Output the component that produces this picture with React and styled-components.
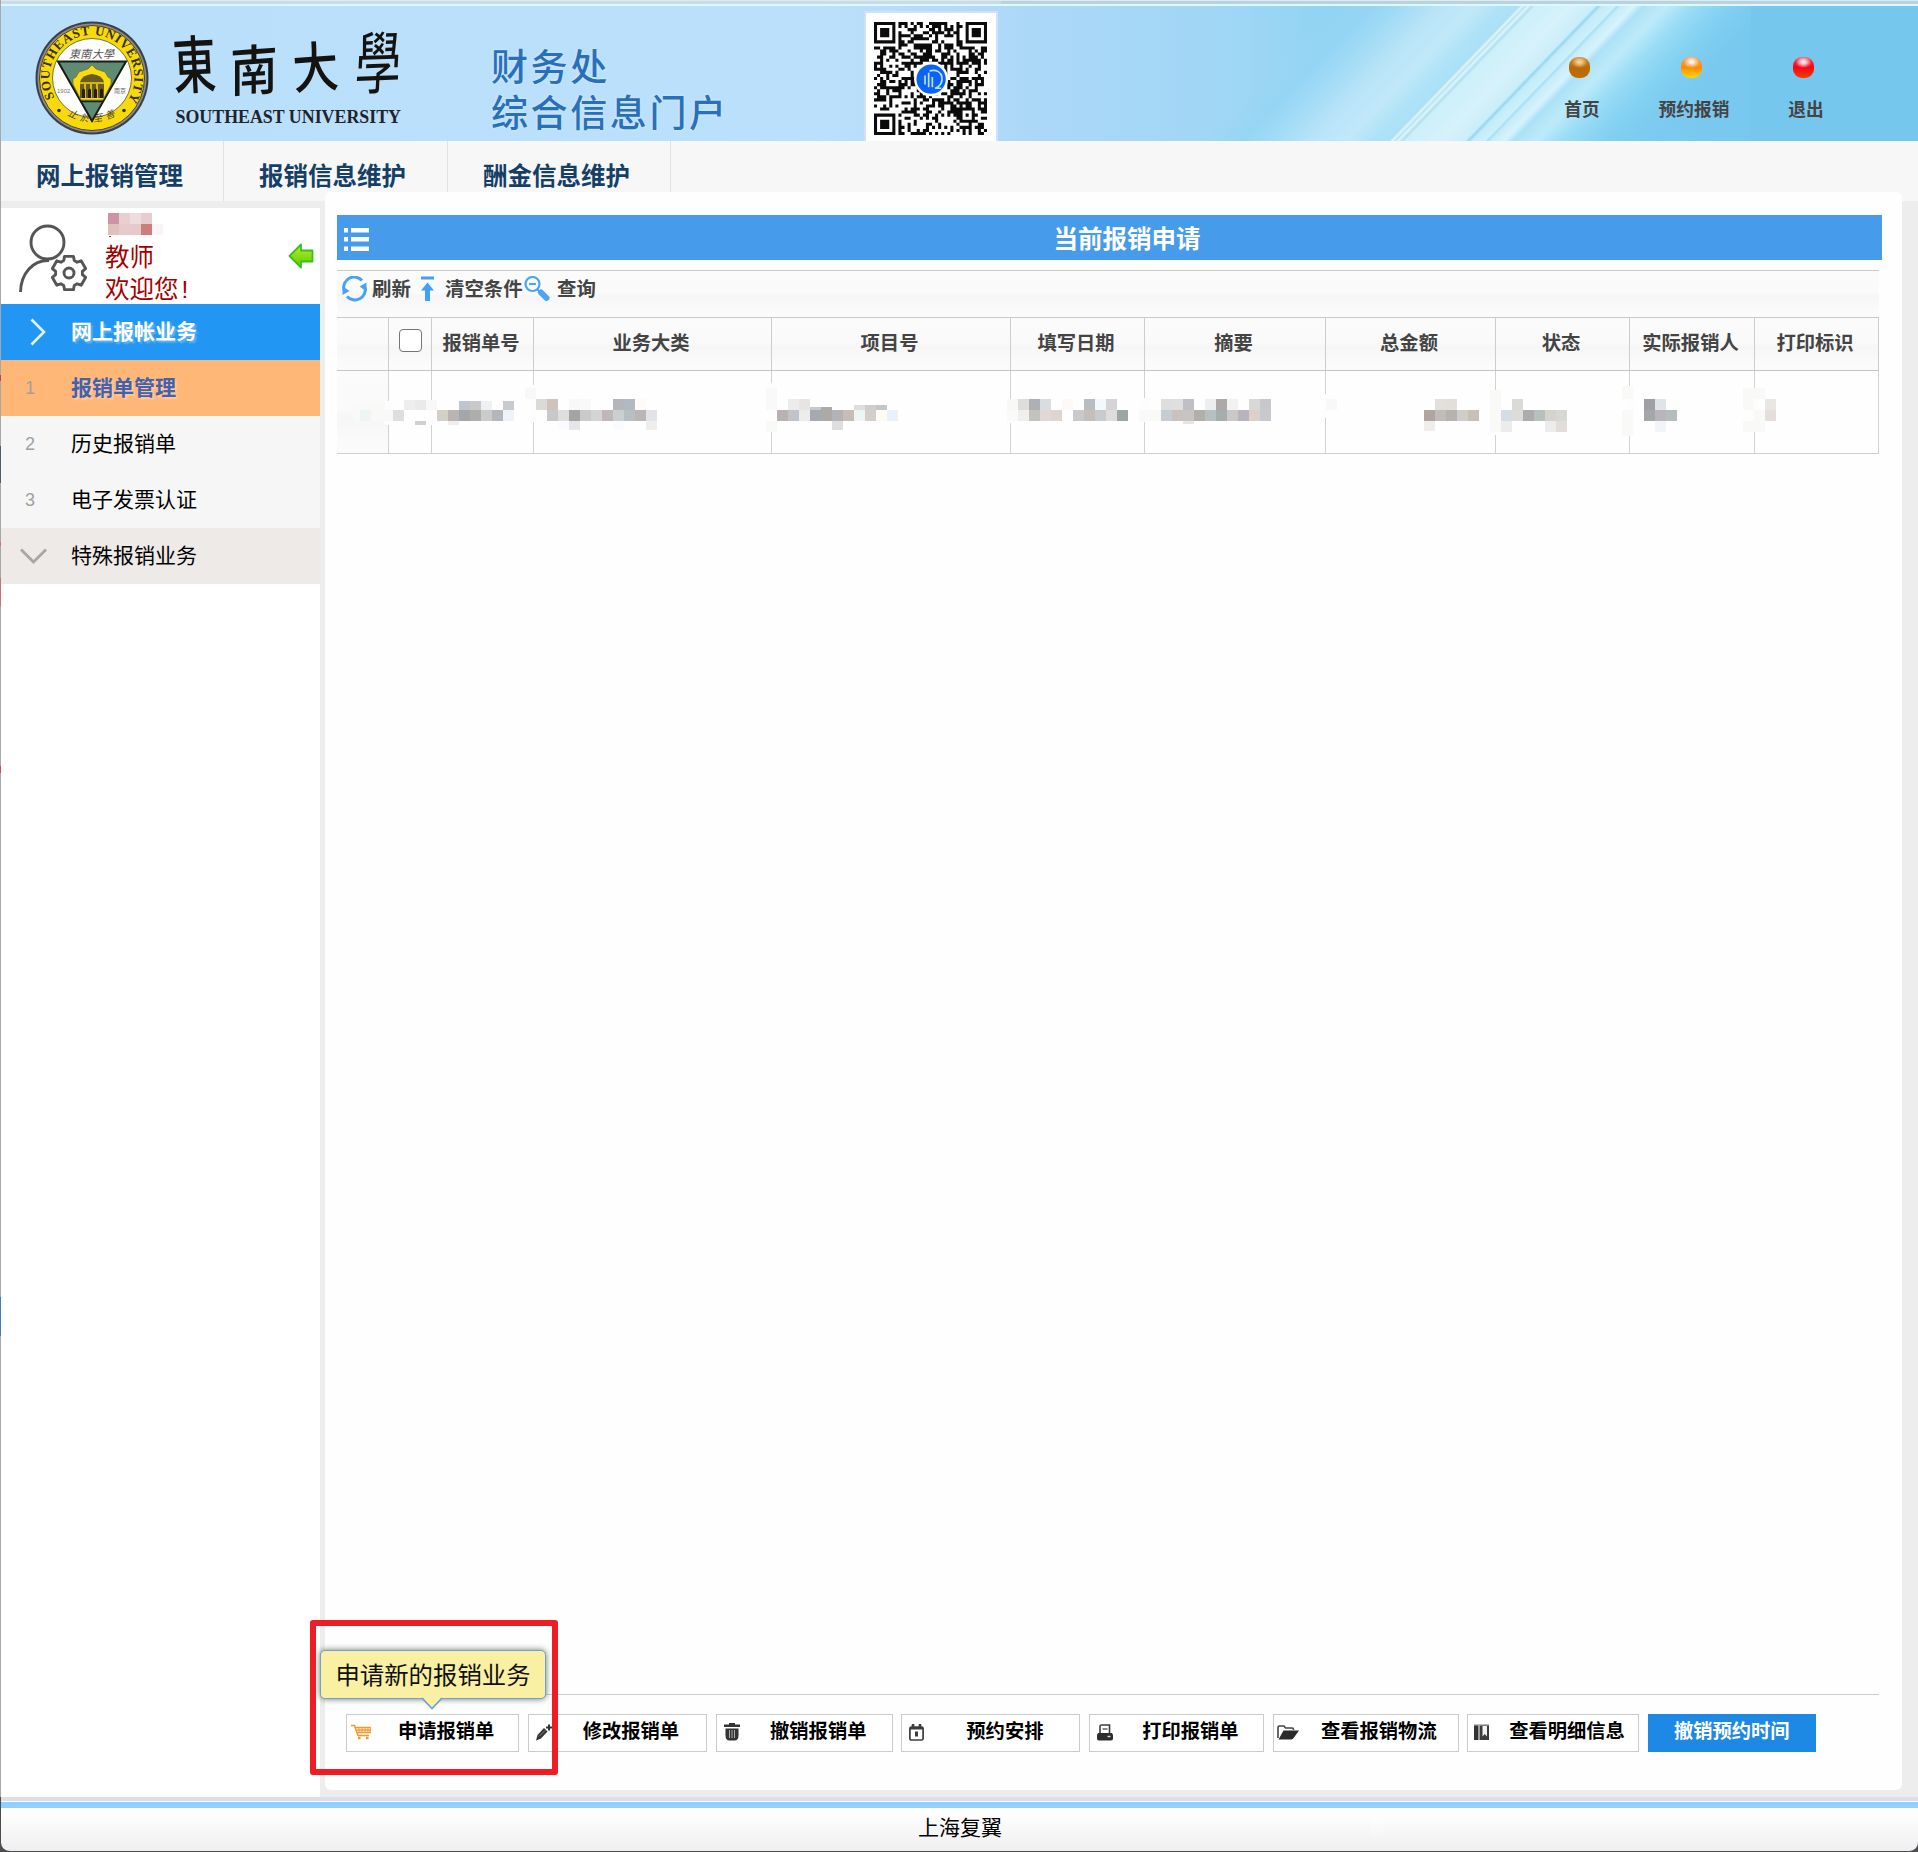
import React from "react";
import styled, { createGlobalStyle, css } from "styled-components";

const Global = createGlobalStyle`
  *, *::before, *::after { box-sizing: border-box; }
  html, body { margin: 0; padding: 0; }
  body {
    background: #ededed;
    font-family: "Liberation Sans", "Noto Sans CJK SC", sans-serif;
    color: #000;
  }
`;

const Page = styled.div`
  position: relative;
  width: 1918px;
  height: 1852px;
  padding-left: 1px;
  display: flex;
  flex-direction: column;
  background: linear-gradient(
      180deg,
      #a8a8a8 375px, #b0485a 375px 381px, #a8a8a8 381px 446px, #4f5b6e 446px 483px, #a8a8a8 483px 542px,
      #c9707a 542px 546px, #a8a8a8 546px 578px, #c9707a 578px 606px, #a8a8a8 606px 766px, #c9505a 766px 773px,
      #a8a8a8 773px 1297px, #3f7fc0 1297px 1336px, #a8a8a8 1336px 1797px, #4c4c50 1797px
    );
  overflow: hidden;
`;

/* ---------- banner ---------- */

const Banner = styled.header`
  position: relative;
  flex: none;
  height: 141px;
  display: flex;
  align-items: flex-start;
  background: linear-gradient(90deg, #badffb 0, #bbe0fb 820px, #acd8f8 1030px, #a0d6f5 1230px, #92d4f3 1320px, #78c8ef 1720px, #76c7ee 100%);
`;

const BannerArt = styled.svg`
  position: absolute;
  inset: 0;
  width: 100%;
  height: 100%;
`;

const SchoolLogo = styled.svg`
  position: relative;
  flex: none;
  width: 420px;
  height: 141px;
`;

const PortalName = styled.h1`
  position: relative;
  margin: 46px 0 0 70px;
  width: 373px;
  font-size: 37px;
  line-height: 45.5px;
  font-weight: 500;
  letter-spacing: 2.6px;
  color: #2a70b8;
  text-shadow: 0 0 3px #d8effd;
`;

const QrFrame = styled.div`
  position: relative;
  flex: none;
  width: 134px;
  height: 130px;
  margin-top: 11px;
  padding: 9px 0 0 8px;
  border: solid #d3dffd;
  border-width: 2px 2px 0 2px;
  background: #fff;
`;

const QuickLinks = styled.nav`
  position: relative;
  display: flex;
  margin: 57px 0 0 528px;
`;

const QuickLink = styled.a`
  width: 112px;
  display: flex;
  flex-direction: column;
  align-items: center;
  font-size: 17.7px;
  line-height: 24px;
  font-weight: 600;
  color: #444;
`;

const Orb = styled.span`
  width: 21px;
  height: 21px;
  border-radius: 9px;
  margin: 0 5px 20px 0;
  background: radial-gradient(ellipse 8px 6px at 50% 24%, ${(p) => p.$shine} 0, ${(p) => p.$shine} 20%, transparent 100%),
    linear-gradient(180deg, ${(p) => p.$top}, ${(p) => p.$mid} 50%, ${(p) => p.$bottom});
`;

/* ---------- module tabs ---------- */

const Tabs = styled.nav`
  flex: none;
  display: flex;
  height: 60px;
  background: #f7f7f7;
`;

const Tab = styled.a`
  width: ${(p) => p.$w}px;
  padding: 21px 0 0 35px;
  border-right: 1px solid #e2e2e2;
  font-size: 24.5px;
  line-height: 30px;
  font-weight: 700;
  color: #163f68;
`;

/* ---------- side bar ---------- */

const Body = styled.div`
  flex: 1;
  min-height: 0;
  display: flex;
  align-items: stretch;
  background: #ededed;
`;

const Sidebar = styled.aside`
  flex: none;
  width: 319px;
  margin-top: 7px;
  background: #fff;
`;

const UserBox = styled.div`
  height: 96px;
  display: flex;
`;

const UserIcon = styled.svg`
  flex: none;
  width: 104px;
  height: 96px;
`;

const UserText = styled.div`
  flex: 1;
  font-size: 24.5px;
  line-height: 32px;
  color: #a50000;
`;

const Exclaim = styled.span`
  padding-left: 3px;
`;

const NameMosaic = styled.svg`
  display: block;
  width: 70px;
  height: 34px;
`;

const CollapseArrow = styled.svg`
  flex: none;
  width: 26px;
  height: 26px;
  margin: 35px 6px 0 0;
`;

const MenuItem = styled.a`
  display: flex;
  align-items: center;
  height: 56px;
  font-size: 21px;
  line-height: 30px;
  background: ${(p) => p.$bg};
  color: ${(p) => p.$color || "#000"};
  ${(p) =>
    p.$bold &&
    css`
      font-weight: 700;
      text-shadow: 2px 2px 2px rgba(255, 255, 255, 0.3);
    `}
`;

const MenuMark = styled.span`
  width: 70px;
  padding-left: ${(p) => p.$pad || 24}px;
  display: flex;
  align-items: center;
  font-size: 18px;
  font-weight: 400;
  text-shadow: none;
  color: #a0a0a0;
`;

/* ---------- content ---------- */

const Panel = styled.main`
  position: relative;
  width: 1577px;
  margin: -9px 0 7px 5px;
  padding: 23px 0 0 12px;
  display: flex;
  flex-direction: column;
  background: #fefefe;
  border-radius: 6px;
`;

const TitleBar = styled.div`
  flex: none;
  display: flex;
  align-items: center;
  width: 1545px;
  height: 45px;
  padding: 4px 7px 0;
  background: #469bea;
`;

const Title = styled.h2`
  flex: 1;
  margin: 1px 0 0 0;
  padding-left: 10px;
  text-align: center;
  font-size: 24.5px;
  line-height: 30px;
  font-weight: 700;
  color: #fff;
`;

const fade = "linear-gradient(180deg, #fbfbfb 0, #fafafa 48%, #f6f6f6 54%, #fafafa 85%, #fbfbfb 100%)";

const Toolbar = styled.div`
  flex: none;
  display: flex;
  width: 1542px;
  height: 47px;
  margin-top: 10px;
  padding: 5px 0 0 5px;
  border-top: 1px solid #c9c9c9;
  background: ${fade};
`;

const ToolButton = styled.button`
  display: flex;
  align-items: flex-start;
  width: ${(p) => p.$w}px;
  padding: 0;
  border: 0;
  background: none;
  font: 700 19.4px/26px "Liberation Sans", "Noto Sans CJK SC", sans-serif;
  color: #444;
  white-space: nowrap;

  svg {
    flex: none;
    margin-right: ${(p) => p.$gap}px;
  }
`;

const Grid = styled.div`
  position: relative;
  flex: none;
  width: 1542px;
`;

const GridRow = styled.div`
  display: grid;
  grid-template-columns: 52px 43px 102px 238px 239px 134px 181px 170px 134px 125px 124px;
  height: ${(p) => p.$h}px;
  border-bottom: 1px solid #cfcfcf;
  ${(p) =>
    p.$head &&
    css`
      border-top: 1px solid #c9c9c9;
      border-bottom-color: #c5c5c5;
      background: ${fade};
    `}
`;

const Cell = styled.div`
  display: flex;
  align-items: center;
  justify-content: center;
  padding-right: 3px;
  border-right: 1px solid ${(p) => (p.$head ? "#cdcdcd" : "#d2d2d2")};
  background: ${(p) => (p.$shade ? fade : "none")};
  font-size: 19.3px;
  line-height: 26px;
  font-weight: 700;
  color: #444;
`;

const CheckBox = styled.span`
  width: 23px;
  height: 23px;
  margin: -7px 0 0 3px;
  border: 1.5px solid #757575;
  border-radius: 4px;
  background: #fff;
`;

const Redaction = styled.svg`
  position: absolute;
  left: 0;
  top: 0;
  width: 1542px;
  height: 137px;
`;

const Spacer = styled.div`
  flex: 1;
`;

const ActionBar = styled.div`
  flex: none;
  display: flex;
  gap: 8.7px;
  width: 1542px;
  height: 96px;
  padding: 19px 0 0 9px;
  border-top: 1px solid #cbcbcb;
`;

const ActionButton = styled.button`
  position: relative;
  flex: none;
  display: flex;
  align-items: center;
  width: ${(p) => p.$w}px;
  height: 38px;
  padding: 0 0 2px ${(p) => p.$pad}px;
  border: 1px solid ${(p) => (p.$primary ? "#1e88e5" : "#cbcbcb")};
  background: ${(p) => (p.$primary ? "#1e88e5" : "#fff")};
  color: ${(p) => (p.$primary ? "#fff" : "#000")};
  font: 700 19.3px/26px "Liberation Sans", "Noto Sans CJK SC", sans-serif;
  white-space: nowrap;

  & > svg {
    flex: none;
    margin-right: ${(p) => p.$gap}px;
  }
`;

const Tip = styled.span`
  position: absolute;
  left: -27px;
  top: -65px;
  width: 226px;
  height: 49px;
  border: 1px solid #6ba3cf;
  border-radius: 5px;
  background: #faf0a3;
  box-shadow: 0 0 6px rgba(0, 0, 0, 0.55);
  font-size: 24.4px;
  line-height: 50px;
  font-weight: 400;
  color: #111;
  text-align: center;

  svg {
    position: absolute;
    left: 101px;
    top: 46px;
  }
`;

const Highlight = styled.div`
  position: absolute;
  left: 310px;
  top: 1620px;
  width: 248px;
  height: 155px;
  border: 6px solid #ef1c24;
  border-radius: 3px;
`;

/* ---------- footer ---------- */

const Footer = styled.footer`
  flex: none;
  height: 55px;
  display: flex;
  flex-direction: column;
  border-top: 4px solid #dcdfeb;
  border-bottom: 1px solid #4c4c50;
  border-radius: 0 0 9px 9px;
  background: linear-gradient(180deg, #fefefe, #f2f2f2) 1369px 16px / 13px 28px no-repeat,
    linear-gradient(180deg, #fff 0, #fff 10px, #efefef 100%);
`;

const FooterRule = styled.div`
  flex: none;
  height: 6px;
  margin-top: 1px;
  background: #91cfff;
`;

const FooterText = styled.div`
  margin-top: 5px;
  padding-left: 1px;
  text-align: center;
  font-size: 21px;
  line-height: 30px;
`;

/* ---------- drawings ---------- */

const QR_SIZE = 37;

function qrPath() {
  let seed = 20231;
  const rand = () => {
    seed = (seed * 1103515245 + 12345) % 2147483648;
    return seed / 2147483648;
  };
  const ringed = (x, y, cx, cy, r) => {
    const d = Math.max(Math.abs(x - cx), Math.abs(y - cy));
    return d <= r ? d : -1;
  };
  let d = "";
  for (let y = 0; y < QR_SIZE; y++) {
    for (let x = 0; x < QR_SIZE; x++) {
      let on = rand() < 0.5;
      for (const [cx, cy] of [[3, 3], [33, 3], [3, 33]]) {
        const k = ringed(x, y, cx, cy, 4);
        if (k >= 0) on = k === 3 || k <= 1;
      }
      const a = ringed(x, y, 30, 30, 2);
      if (a >= 0) on = a !== 1;
      if (on) d += `M${x} ${y}h1v1h-1z`;
    }
  }
  return d;
}

const QR_PATH = qrPath();

const QrSvg = styled.svg`
  display: block;
`;

function QrCode() {
  return (
    <QrSvg width="113" height="113" viewBox="0 0 37 37">
      <path d={QR_PATH} fill="#0b0b0b" />
      <circle cx="18.7" cy="18.7" r="5.6" fill="#fff" />
      <circle cx="18.7" cy="18.7" r="4.8" fill="#0a63f5" />
      <path d="M16.7 17.5v3M17.9 16.6v4.8M19.1 18v3.4M18.2 16c5-1.2 5.2 4.8 1.8 5.7h2" fill="none" stroke="#bfe0f2" strokeWidth=".55" />
    </QrSvg>
  );
}

function Streaks() {
  const stops = [
    [1200, "#9bd6f5", 0],
    [1240, "#95d5f4", 0.9],
    [1265, "#a0dbf6", 0.9],
    [1310, "#b9e4f8", 1],
    [1345, "#c0e8f9", 1],
    [1372, "#aee2f7", 1],
    [1388, "#abe1f7", 1],
    [1391, "#e0f6fb", 1],
    [1394, "#b7e4f1", 1],
    [1397, "#dff5fb", 1],
    [1401, "#b3dfed", 1],
    [1404, "#ccf0fa", 1],
    [1440, "#d6f2fa", 1],
    [1464, "#caeef9", 1],
    [1467, "#97d6ee", 1],
    [1471, "#c2ecfa", 1],
    [1484, "#ccf0fb", 1],
    [1486, "#a8dff3", 1],
    [1490, "#c6edfa", 1],
    [1503, "#d6f3fc", 1],
    [1512, "#acE2f6", 1],
    [1535, "#bdeafa", 1],
    [1560, "#9cddf6", 1],
    [1600, "#84d2f2", 0.8],
    [1660, "#78c9ee", 0],
  ];
  const x0 = 1200;
  const span = 480;
  return (
    <BannerArt viewBox="0 0 1917 141" preserveAspectRatio="none">
      <defs>
        <linearGradient id="streak">
          {stops.map(([x, color, o]) => (
            <stop key={x} offset={(x - x0) / span} stopColor={color} stopOpacity={o} />
          ))}
        </linearGradient>
      </defs>
      <rect x={x0} y="-141" width={span} height="141" fill="url(#streak)" transform="translate(0 141) skewX(-44)" />
      <rect x="1750" width="170" height="141" fill="#76c7ee" />
      <rect width="1917" height="1" fill="#dcebf2" />
      <rect y="1" width="1917" height="3" fill="#b9d2df" />
      <rect y="1" width="1000" height="3" fill="#c9dbe8" />
      <rect y="4" width="1917" height="2" fill="#def8fb" />
    </BannerArt>
  );
}

function Logo() {
  return (
    <SchoolLogo viewBox="1 0 420 141">
      <defs>
        <path id="ringTop" d="M54.500 97.500A42.500 42.500 0 1 1 129.500 97.500" />
        <path id="ringBottom" d="M60 110A49.500 49.500 0 0 0 124 110" />
      </defs>
      <circle cx="92" cy="78" r="56.500" fill="#3c3d4d" />
      <circle cx="92" cy="78" r="54.500" fill="#908b86" />
      <circle cx="92" cy="78" r="52.500" fill="#f7d90c" stroke="#4a4632" strokeWidth="1" />
      <circle cx="92" cy="78" r="39.500" fill="#fdfefc" stroke="#7b7136" strokeWidth="1" />
      <text fontFamily="Liberation Serif, serif" fontWeight="700" fontSize="13" fill="#35300f">
        <textPath href="#ringTop" textLength="178">SOUTHEAST UNIVERSITY</textPath>
      </text>
      <text fontFamily="Noto Sans CJK SC, sans-serif" fontSize="9.500" fill="#4b4411" fontStyle="italic">
        <textPath href="#ringBottom" startOffset="9" textLength="50">止於至善</textPath>
      </text>
      <circle cx="59" cy="110.500" r="1.800" fill="#35300f" />
      <circle cx="124" cy="110.500" r="1.800" fill="#35300f" />
      <text x="69" y="57.500" fontFamily="Noto Sans CJK TC, sans-serif" fontSize="11" textLength="45" fill="#555" fontStyle="italic">東南大學</text>
      <text x="57" y="92.500" fontFamily="Liberation Sans, sans-serif" fontSize="6" fill="#777">1902</text>
      <text x="114" y="92.500" fontFamily="Noto Sans CJK SC, sans-serif" fontSize="6" fill="#666">南京</text>
      <path d="M58 61.500H126L92 121Z" fill="#5f8a73" stroke="#191c17" strokeWidth="2" />
      <path d="M92 65l4 4 9 3 3 5 3 2v5L103 100H81L73 84v-5l3-2 3-5 9-3z" fill="#f6dc10" stroke="#6d6212" strokeWidth=".6" />
      <path d="M80 98V82q2-7 12-8q10 1 12 8V98Z" fill="#6b5b1c" />
      <path d="M80 83h24M85 84v14M91 84v14M97 84v14" stroke="#f1d318" strokeWidth="1.600" />
      <path d="M82 98V90q2-3 3 0v8zM88 98V90q2-3 3 0v8zM94 98V90q2-3 3 0v8zM100 98V90q2-3 3 0v8z" fill="#241d08" />
      <path d="M81 101.500h22" stroke="#191c17" strokeWidth="1.500" />
      <g fontFamily="Noto Sans CJK TC, Noto Sans CJK SC, sans-serif" fontWeight="500" fill="#15130f">
        <text transform="translate(174 89) rotate(-3) scale(.8 1.16)" fontSize="54">東</text>
        <text transform="translate(230 92) rotate(-4) skewX(-4) scale(.92 1.05)" fontSize="52">南</text>
        <text transform="translate(294 89) rotate(-4) scale(.88 1.05)" fontSize="52">大</text>
        <text transform="translate(354 89) rotate(-2) skewX(-5) scale(.85 1.26)" fontSize="54" fontWeight="400">學</text>
      </g>
      <text x="175.500" y="122.500" fontFamily="Liberation Serif, serif" fontWeight="700" fontSize="18.500" textLength="225.500" lengthAdjust="spacingAndGlyphs" fill="#1e242b">
        SOUTHEAST UNIVERSITY
      </text>
    </SchoolLogo>
  );
}

function UserGear() {
  const teeth = [];
  for (let i = 0; i < 6; i++) {
    const a = -90 + i * 60;
    const pt = (r, deg) => {
      const t = ((a + deg) * Math.PI) / 180;
      return `${(68 + r * Math.cos(t)).toFixed(2)} ${(65 + r * Math.sin(t)).toFixed(2)}`;
    };
    teeth.push(`${i ? "L" : "M"}${pt(13.5, -23)}L${pt(17.2, -15)}L${pt(17.2, 15)}L${pt(13.5, 23)}`);
  }
  return (
    <UserIcon viewBox="0 0 104 96" fill="none" stroke="#555" strokeWidth="2.900" strokeLinejoin="round">
      <circle cx="46.500" cy="34.500" r="16.500" />
      <path d="M19.500 84C20 65 32 52 48 52.500" />
      <path d={teeth.join("") + "Z"} fill="#fff" />
      <circle cx="68" cy="65" r="5" />
    </UserIcon>
  );
}

const blocks = (x, y, colors, w = 11, h = 11) =>
  colors.map((c, i) => c && <rect key={`${x}-${y}-${i}`} x={x + i * w} y={y} width={w + 0.05} height={h + 0.05} fill={c} />);

const MOSAIC = [
  [404, 400, ["#eeeeee", "#eaeaea", "#f8f8f8"], 11, 10],
  [382, 410, ["#f8f8f8", "#dedede"]],
  [415, 421, ["#d0d0d0"], 11, 4],
  [459, 401, ["#bfc5cf", "#c9c9cb", "#eef0f1", null, "#c8cace"], 11, 9],
  [437, 410, ["#d3d0c8", "#bab5b3", "#a3a6ab", "#aeaeae", "#cbcbcb", "#b5b6bb", "#edf4f9"]],
  [448, 421, ["#eeeeee"], 11, 4],
  [525, 388, ["#f8f8f7"]],
  [536, 399, ["#dadad6", "#cfc3bb", null, "#f8f8f8", "#f9f9f9", null, null, "#b5b6bc", "#b0bac2", "#fffaf7"]],
  [547, 410, ["#c8c8c8", "#dedede", "#a4a5a2", "#cacaca", "#d4d4d4", "#c0b8b8", "#cccfcf", "#b6bfc1", "#b9b6b5", "#e2e3e7"]],
  [558, 421, ["#fafbfe", "#e6e6e9", null, null, null, "#f9fbff", null, null, "#efeeed"], 11, 9],
  [766, 388, ["#f9f9f9"], 11, 22],
  [766, 421, ["#f9f9f8"]],
  [788, 399, ["#ececed", "#e6e5e4"]],
  [810, 407, ["#c8c8c8", "#aaaaaa"], 11, 3],
  [854, 405, ["#dedede", "#d0cecc", "#c5c6ca"], 11, 5],
  [777, 410, ["#b8b2b0", "#c0c4c8", "#ececec", "#a7a9b2", "#adaaa5", "#b3b2b4", "#c6bdb7", "#eef5f5", "#d2cec9", "#fdfbf2", "#e9f2fb"]],
  [832, 421, ["#dedede"], 11, 9],
  [1007, 399, ["#f8f8f7", "#dfddd9", "#aeb0b4", "#d9dce0", null, "#fcf9f8", null, "#b8bdc0", "#f2f9fd", "#d4d4d6"]],
  [1007, 410, ["#fafafa", "#f0efed", "#c4c2bd", "#e0d8d5", "#dcd5d0", null, "#c9c9cb", "#c4bfbb", "#c9cacb", "#dedddb", "#9ea5a6"]],
  [1161, 399, ["#dededf", "#e0dfdf", "#bfbfc5", null, "#eceef0", "#ada9aa", "#f2f2f2", null, "#d8d8d8", "#c7c8cb"]],
  [1139, 410, ["#f9f9f8", "#f9f9f8", "#c6ccd2", "#cac0be", "#c9c4c4", "#b0b0aa", "#b6c0c2", "#a6adaf", "#c9cac8", "#b8b3bf", "#dcd0cb", "#c8c9ce"]],
  [1183, 421, ["#e6e4e4"], 11, 3],
  [1326, 399, ["#f9f8f7"]],
  [1435, 399, ["#e3dfdb", "#e2dedb"]],
  [1424, 410, ["#b0a69f", "#c0bcb9", "#b5b2b0", "#d0ccc9", "#cabfb5"]],
  [1424, 421, ["#f0eeeb"], 11, 10],
  [1490, 390, ["#f9f9f8"], 11, 42],
  [1512, 399, ["#dadad6"]],
  [1501, 410, ["#d5dce3", "#dcdcd9", "#afaaac", "#b8c0be", "#d6d2ce", "#d7d8d6"]],
  [1501, 421, ["#ececec", null, null, null, "#ececec", "#e2dcdb"]],
  [1622, 386, ["#f9f9f8"], 11, 13],
  [1622, 410, ["#f9f9f8"], 11, 26],
  [1644, 399, ["#a09fa3", "#dfe4e9", "#fdfdfb"]],
  [1644, 410, ["#a2a7aa", "#bab5ba", "#b3bebc"]],
  [1655, 421, ["#f2f5f8"]],
  [1743, 388, ["#f9f9f8", "#f9f9f8"]],
  [1743, 399, ["#f9f9f8", null, "#e9e6e3"]],
  [1754, 410, ["#f9f9f8", "#e5dedb"]],
  [1743, 421, ["#f9f9f8", "#f9f9f8"]],
];

const ERASED = [
  [384, 401, 24], [428, 409, 16], [530, 385, 37], [768, 383, 48], [1008, 399, 24], [1142, 398, 24],
  [1323, 394, 24], [1493, 390, 45], [1627, 386, 50], [1751, 388, 44],
];

function RowMosaic() {
  return (
    <Redaction viewBox="337 317 1542 137" shapeRendering="crispEdges">
      {ERASED.map(([x, y, h]) => (
        <rect key={x} x={x} y={y} width="7" height={h} fill="#fdfdfd" />
      ))}
      <rect x="353" y="403" width="32" height="18" fill="#f9f9f8" />
      <rect x="360" y="410" width="11" height="11" fill="#eff5f4" />
      {MOSAIC.map(([x, y, colors, w, h]) => blocks(x, y, colors, w, h))}
    </Redaction>
  );
}

const ListIcon = () => (
  <svg width="25" height="25" viewBox="0 0 25 25" fill="#fff">
    {[1, 10, 19.500].map((y) => (
      <g key={y}>
        <rect x="0" y={y} width="4" height="4.500" />
        <rect x="7" y={y} width="18" height="4.500" />
      </g>
    ))}
  </svg>
);

const RefreshIcon = () => (
  <svg width="25" height="26" viewBox="0 0 25 26" fill="none" stroke="#49a3f2" strokeWidth="3">
    <path d="M2 14A10.500 10.500 0 0 1 20 4.500" />
    <path d="M23 11A10.500 10.500 0 0 1 5 20.500" />
    <path d="M24.500 6.500v9l-7-5zM.5 19v-9l7 5z" fill="#49a3f2" stroke="none" />
  </svg>
);

const ClearIcon = () => (
  <svg width="13" height="26" viewBox="0 0 13 26" fill="#42a0f5">
    <path d="M0 .5h13v3H0zM6.500 6.500L13 14.500H9v10.500H4V14.500H0z" />
  </svg>
);

const SearchIcon = () => (
  <svg width="26" height="26" viewBox="0 0 26 26" fill="none" stroke="#4ba5f3">
    <circle cx="8.500" cy="8" r="7" strokeWidth="2.200" />
    <path d="M5 8h7M13.500 13.500l3 3" strokeWidth="2" />
    <path d="M17 16.500l5.500 5.500" strokeWidth="6" strokeLinecap="round" />
  </svg>
);

const CartIcon = () => (
  <svg width="20" height="16" viewBox="0 0 20 16" fill="none" stroke="#f39a2c">
    <path d="M0 1.500h3.500L7 11.500h11" strokeWidth="1.600" />
    <path d="M5 3.500h14.500M5.500 6h14M6.500 8.500h13" strokeWidth="1.500" />
    <path d="M8 3v6M11 3v6M14 3v6M17 3v6M19.300 3v6" strokeWidth="1" />
    <path d="M7 14h2.500M15 14h2.500" strokeWidth="2.400" />
  </svg>
);

const PenIcon = () => (
  <svg width="16" height="17" viewBox="0 0 16 17" fill="#333">
    <path d="M0 16.500l1.500-5.500L8 4l3.500 3.500L5 14.500z" />
    <path d="M13 .5v6M10 3.500h6" stroke="#333" strokeWidth="2" />
    <path d="M3 12.500l6-6" stroke="#999" strokeWidth=".8" />
  </svg>
);

const TrashIcon = () => (
  <svg width="16" height="18" viewBox="0 0 16 18" fill="#333">
    <path d="M5 0h6v1.500h5V4H0V1.500h5z" />
    <path d="M1.500 5.500h13v7q0 5-4 5h-5q-4 0-4-5z" />
    <path d="M5.500 7v8M8 7v8M10.500 7v8" stroke="#ccc" strokeWidth=".8" />
  </svg>
);

const CalendarIcon = () => (
  <svg width="15" height="17" viewBox="0 0 15 17" fill="none" stroke="#3c3c3c">
    <rect x=".9" y="3" width="13.200" height="13" rx="1.500" strokeWidth="1.700" />
    <path d="M1 4.300h13M4 0v5M11 0v5" strokeWidth="2.600" />
    <path d="M7.500 7.500v5" strokeWidth="3" />
  </svg>
);

const PrinterIcon = () => (
  <svg width="16" height="17" viewBox="0 0 16 17" fill="none" stroke="#3c3c3c">
    <path d="M3 10V2.500Q3 1 4.500 1H12.500V10" strokeWidth="1.600" />
    <path d="M5.500 5h5" strokeWidth="1.200" />
    <path d="M1 9h14l1 2v3.500q0 2-2 2H2q-2 0-2-2V11z" fill="#2c2c2c" stroke="none" />
    <path d="M10.500 12.500h3" stroke="#ddd" strokeWidth="1.400" />
  </svg>
);

const FolderIcon = () => (
  <svg width="22" height="15" viewBox="0 0 22 15" fill="none" stroke="#444">
    <path d="M1 13V2.500Q1 1 2.500 1H7l1.500 2H15q1.500 0 1.500 1.500V5" strokeWidth="1.600" />
    <path d="M6.500 5.500H22L17 12.500Q16 14.500 14 14.500H1.500z" fill="#2a2a2a" stroke="none" />
  </svg>
);

const BookIcon = () => (
  <svg width="15" height="16" viewBox="0 0 15 16">
    <path d="M0 1h4.500v15H0z" fill="#333" />
    <path d="M5.500 0H15v16H5.500z" fill="#3c3c3c" />
    <path d="M8.500 2h4.500v10.500l-2.200-2.500-2.300 2.500z" fill="#f2f2f2" />
    <path d="M0 0h15v1.500H0z" fill="#bbb" />
  </svg>
);

/* ---------- page ---------- */

const COLUMNS = ["", "check", "报销单号", "业务大类", "项目号", "填写日期", "摘要", "总金额", "状态", "实际报销人", "打印标识"];

const ACTIONS = [
  { text: "申请报销单", Icon: CartIcon, w: 173, pad: 4, gap: 27, tip: "申请新的报销业务" },
  { text: "修改报销单", Icon: PenIcon, w: 179.7, pad: 7, gap: 31 },
  { text: "撤销报销单", Icon: TrashIcon, w: 176.6, pad: 7, gap: 30 },
  { text: "预约安排", Icon: CalendarIcon, w: 179.1, pad: 7, gap: 42 },
  { text: "打印报销单", Icon: PrinterIcon, w: 175.2, pad: 7, gap: 29 },
  { text: "查看报销物流", Icon: FolderIcon, w: 185.5, pad: 3, gap: 22 },
  { text: "查看明细信息", Icon: BookIcon, w: 172.1, pad: 6, gap: 20 },
  { text: "撤销预约时间", w: 168, pad: 25, primary: true },
];

export default function App() {
  return (
    <>
      <Global />
      <Page>
        <Banner>
          <Streaks />
          <Logo />
          <PortalName>
            财务处
            <br />
            综合信息门户
          </PortalName>
          <QrFrame>
            <QrCode />
          </QrFrame>
          <QuickLinks>
            <QuickLink>
              <Orb $shine="#f6cf8e" $top="#c98a35" $mid="#b96a06" $bottom="#bf6f04" />
              首页
            </QuickLink>
            <QuickLink>
              <Orb $shine="#fff3e4" $top="#f2a253" $mid="#ff8a06" $bottom="#ffd800" />
              预约报销
            </QuickLink>
            <QuickLink>
              <Orb $shine="#ffe6e9" $top="#f0405a" $mid="#fb0313" $bottom="#ee4200" />
              退出
            </QuickLink>
          </QuickLinks>
        </Banner>

        <Tabs>
          <Tab $w={223}>网上报销管理</Tab>
          <Tab $w={224}>报销信息维护</Tab>
          <Tab $w={223}>酬金信息维护</Tab>
        </Tabs>

        <Body>
          <Sidebar>
            <UserBox>
              <UserGear />
              <UserText>
                <NameMosaic viewBox="0 0 70 34" shapeRendering="crispEdges">
                  {blocks(3, 5, ["#cf93a8", "#e9cfd0", "#f0dcdf", "#e8cdd0"])}
                  {blocks(3, 16, ["#dfc0bc", "#e7cacc", "#e8c9cb", "#cd7d7e", "#faf4f8"])}
                  <rect x="4" y="28" width="2" height="1" fill="#b03030" />
                </NameMosaic>
                教师
                <br />
                欢迎您<Exclaim>!</Exclaim>
              </UserText>
              <CollapseArrow viewBox="0 0 26 26">
                <defs>
                  <linearGradient id="leaf" x1="0" y1="0" x2="0" y2="1">
                    <stop offset="0" stopColor="#b4ee2e" />
                    <stop offset="1" stopColor="#62c900" />
                  </linearGradient>
                </defs>
                <path d="M1.500 13L13 1.500V7.500H24.500V18.500H13V24.500Z" fill="url(#leaf)" stroke="#36c01e" strokeWidth="1.800" strokeLinejoin="round" />
              </CollapseArrow>
            </UserBox>
            <MenuItem $bg="#2196f3" $color="#fff" $bold>
              <MenuMark $pad={29}>
                <svg width="16" height="28" viewBox="0 0 16 28" fill="none" stroke="#e3f1fd" strokeWidth="2.600">
                  <path d="M1.500 1.500L14 14L1.500 26.500" />
                </svg>
              </MenuMark>
              网上报帐业务
            </MenuItem>
            <MenuItem $bg="#ffb778" $color="#4361ad" $bold>
              <MenuMark>1</MenuMark>
              报销单管理
            </MenuItem>
            <MenuItem $bg="#f6f6f6">
              <MenuMark>2</MenuMark>
              历史报销单
            </MenuItem>
            <MenuItem $bg="#f6f6f6">
              <MenuMark>3</MenuMark>
              电子发票认证
            </MenuItem>
            <MenuItem $bg="#eeeae7">
              <MenuMark $pad={19}>
                <svg width="27" height="16" viewBox="0 0 27 16" fill="none" stroke="#a9a7a5" strokeWidth="2.800">
                  <path d="M1 1.500L13.500 14L26 1.500" />
                </svg>
              </MenuMark>
              特殊报销业务
            </MenuItem>
          </Sidebar>

          <Panel>
            <TitleBar>
              <ListIcon />
              <Title>当前报销申请</Title>
            </TitleBar>
            <Toolbar>
              <ToolButton $w={79} $gap={5}>
                <RefreshIcon />
                刷新
              </ToolButton>
              <ToolButton $w={103} $gap={11}>
                <ClearIcon />
                清空条件
              </ToolButton>
              <ToolButton $w={80} $gap={7}>
                <SearchIcon />
                查询
              </ToolButton>
            </Toolbar>
            <Grid>
              <GridRow $h={54} $head>
                {COLUMNS.map((name, i) => (
                  <Cell key={i} $head>
                    {name === "check" ? <CheckBox /> : name}
                  </Cell>
                ))}
              </GridRow>
              <GridRow $h={83}>
                {COLUMNS.map((name, i) => (
                  <Cell key={i} $shade={i === 0} />
                ))}
              </GridRow>
              <RowMosaic />
            </Grid>
            <Spacer />
            <ActionBar>
              {ACTIONS.map(({ text, Icon, w, pad, gap, tip, primary }) => (
                <ActionButton key={text} $w={w} $pad={pad} $gap={gap} $primary={primary}>
                  {Icon && <Icon />}
                  {text}
                  {tip && (
                    <Tip>
                      {tip}
                      <svg width="20" height="13" viewBox="0 0 20 13">
                        <path d="M0 0H20L10 11Z" fill="#faf0a3" />
                        <path d="M0 1L10 11.500L20 1" fill="none" stroke="#6ba3cf" strokeWidth="1.600" />
                      </svg>
                    </Tip>
                  )}
                </ActionButton>
              ))}
            </ActionBar>
          </Panel>
        </Body>

        <Footer>
          <FooterRule />
          <FooterText>上海复翼</FooterText>
        </Footer>
        <Highlight />
      </Page>
    </>
  );
}
